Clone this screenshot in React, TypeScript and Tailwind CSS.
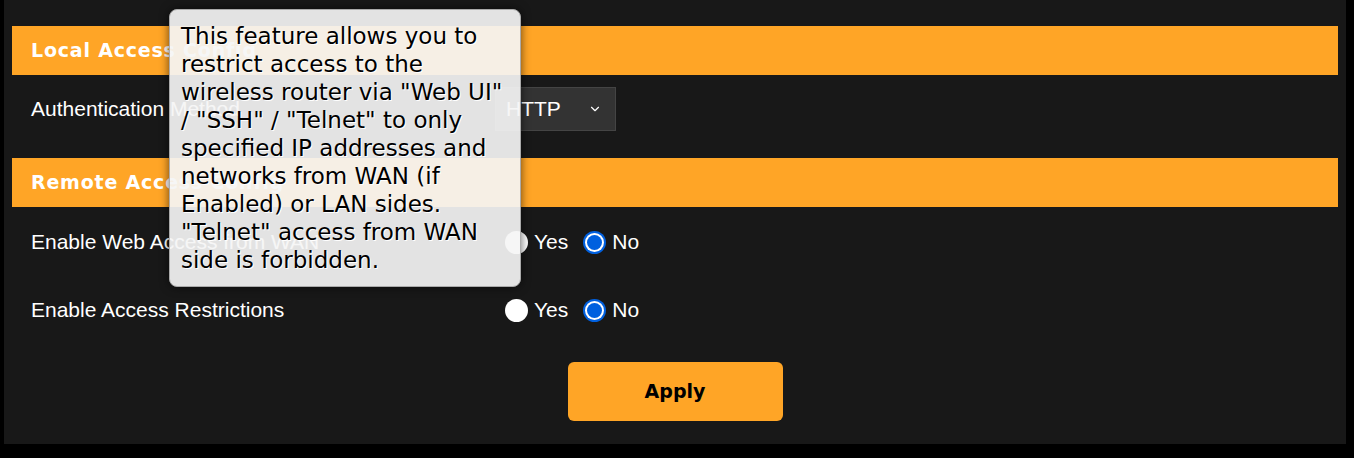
import { ChevronDown } from "lucide-react";

function SectionHeader({ title }: { title: string }) {
  return (
    <div className="flex h-[49px] items-center bg-[#ffa526] pl-[19px]">
      <span className="font-['DejaVu_Sans',sans-serif] text-[19px] font-bold tracking-[0.8px] text-white">{title}</span>
    </div>
  );
}

function Radio({ checked }: { checked?: boolean }) {
  return checked ? (
    <span className="flex h-[23px] w-[23px] items-center justify-center rounded-full bg-[#0060df]">
      <span className="flex h-[19px] w-[19px] items-center justify-center rounded-full bg-white">
        <span className="h-[15px] w-[15px] rounded-full bg-[#0060df]" />
      </span>
    </span>
  ) : (
    <span className="inline-block h-[23px] w-[23px] rounded-full bg-white" />
  );
}

function RadioRow({ label }: { label: string }) {
  return (
    <div className="flex h-[68px] items-center pl-[19px]">
      <span className="w-[474px] text-[21px] text-white">{label}</span>
      <label className="flex items-center gap-[6px] text-[21px] text-white">
        <Radio />
        <span>Yes</span>
      </label>
      <label className="ml-[15px] flex items-center gap-[6px] text-[21px] text-white">
        <Radio checked />
        <span>No</span>
      </label>
    </div>
  );
}

export default function App() {
  return (
    <div className="relative h-[458px] w-[1354px] overflow-hidden bg-black font-['Liberation_Sans',Arial,sans-serif]">
      <div className="ml-[4px] h-[444px] w-[1342px] bg-[#181818] px-[8px] pt-[26px]">
        <SectionHeader title="Local Access Config" />
        <div className="flex h-[83px] items-start pl-[19px] pt-[12px]">
          <span className="w-[464px] pt-[9px] text-[21px] leading-[26px] text-white">Authentication Method</span>
          <div className="flex h-[44px] w-[121px] items-center justify-between border border-[#444] bg-[#333] pl-[10px] pr-[13px]">
            <span className="text-[21px] font-medium text-white">HTTP</span>
            <ChevronDown className="h-[14px] w-[14px] text-white" strokeWidth={2} />
          </div>
        </div>
        <SectionHeader title="Remote Access Config" />
        <div className="h-[1px]" />
        <RadioRow label="Enable Web Access from WAN" />
        <RadioRow label="Enable Access Restrictions" />
        <div className="flex justify-center pt-[18px]">
          <button className="h-[59px] w-[215px] rounded-[6px] bg-[#ffa526] font-['DejaVu_Sans',sans-serif] text-[19px] font-bold text-black">
            Apply
          </button>
        </div>
      </div>

      <div className="absolute left-[169px] top-[9px] w-[352px] rounded-[8px] border border-[#aaa] bg-[rgba(245,245,245,0.92)] px-[11px] pb-[12px] pt-[12px] font-['DejaVu_Sans',Verdana,sans-serif] text-[23px] leading-[28px] text-black shadow-[0_0_10px_rgba(0,0,0,0.6)] [text-shadow:1px_1px_0_#fff]">
        This feature allows you to restrict access to the wireless router via "Web UI" / "SSH" / "Telnet" to only specified IP addresses and networks from WAN (if Enabled) or LAN sides. "Telnet" access from WAN side is forbidden.
      </div>
    </div>
  );
}
